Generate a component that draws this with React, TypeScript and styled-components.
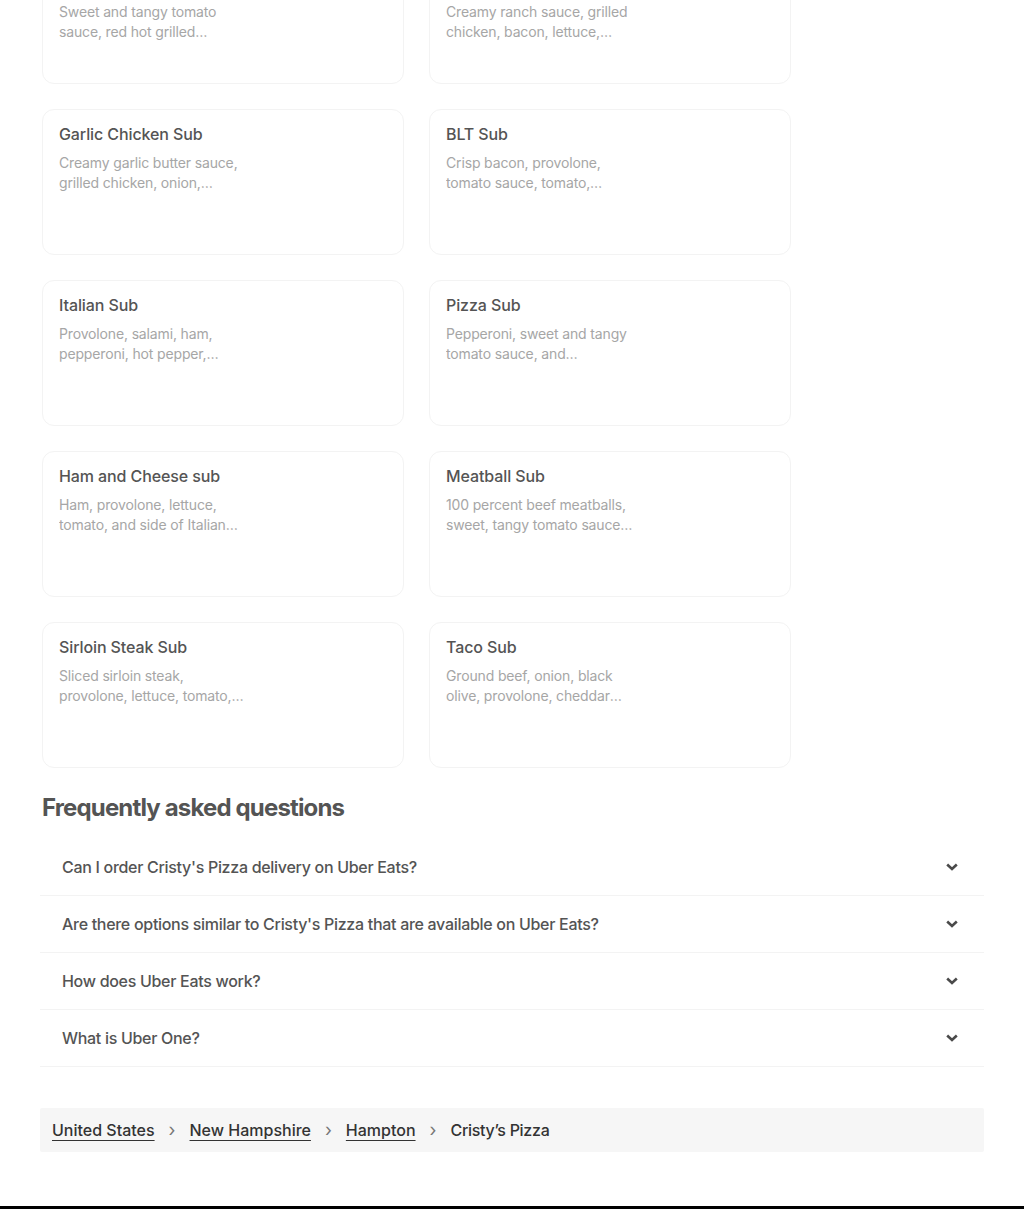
import React from "react";
import styled, { createGlobalStyle } from "styled-components";

const Global = createGlobalStyle`
  html, body { margin: 0; padding: 0; background: #ffffff; }
  body { font-family: Inter, "Noto Sans", Roboto, sans-serif; overflow: hidden; }
  * { box-sizing: border-box; }
`;

const Page = styled.div`
  width: 1024px;
  height: 1209px;
  overflow: hidden;
  display: flex;
  flex-direction: column;
`;

const Main = styled.main`
  padding: 0 40px;
  margin-top: -62px;
  display: flex;
  flex-direction: column;
`;

const Grid = styled.div`
  display: grid;
  grid-template-columns: repeat(2, 362px);
  grid-auto-rows: 146px;
  column-gap: 25px;
  row-gap: 25px;
  padding-left: 2px;
`;

const Card = styled.div`
  border: 1px solid #f3f3f3;
  border-radius: 12px;
  padding: 14px 16px 0 16px;
  display: flex;
`;

const TextCol = styled.div`
  width: 190px;
  display: flex;
  flex-direction: column;
  gap: 9px;
`;

const Title = styled.div`
  font-size: 16px;
  line-height: 20px;
  font-weight: 500;
  color: #545454;
  letter-spacing: -0.1px;
`;

const Desc = styled.div`
  font-size: 14px;
  line-height: 20px;
  color: #a6a6a6;
  letter-spacing: -0.15px;
  display: -webkit-box;
  -webkit-line-clamp: 2;
  -webkit-box-orient: vertical;
  overflow: hidden;
`;

const Heading = styled.h2`
  margin: 24px 0 15px 2px;
  font-size: 24px;
  line-height: 32px;
  font-weight: 700;
  color: #545454;
  letter-spacing: -0.85px;
`;

const FaqList = styled.div`
  display: flex;
  flex-direction: column;
`;

const FaqRow = styled.div`
  height: 57px;
  display: flex;
  align-items: center;
  justify-content: space-between;
  padding: 0 26px 0 22px;
  border-bottom: 1px solid #f3f3f3;
`;

const Question = styled.span`
  font-size: 16px;
  line-height: 20px;
  font-weight: 500;
  color: #545454;
  letter-spacing: -0.3px;
`;

const Chevron = () => (
  <svg width="12" height="8" viewBox="0 0 12 8">
    <polyline points="1.2,1.5 6,6 10.8,1.5" fill="none" stroke="#4a4a4a" strokeWidth="2.6" strokeLinejoin="miter" />
  </svg>
);

const Crumbs = styled.nav`
  margin-top: 41px;
  height: 44px;
  background: #f6f6f6;
  display: flex;
  align-items: center;
  padding: 0 12px;
  border-radius: 2px;
`;

const CrumbLink = styled.a`
  font-size: 16px;
  line-height: 20px;
  font-weight: 500;
  color: #333333;
  text-decoration: underline;
  text-underline-offset: 4px;
  text-decoration-thickness: 1px;
  letter-spacing: 0px;
`;

const CrumbCurrent = styled.span`
  font-size: 16px;
  line-height: 20px;
  font-weight: 500;
  color: #333333;
  letter-spacing: -0.3px;
`;

const Sep = styled.span`
  font-size: 18px;
  color: #777;
  margin: 0 14px;
  line-height: 20px;
`;

const Footer = styled.footer`
  height: 3px;
  background: #000000;
  margin-top: 54px;
`;

const items = [
  ["Spicy Buffalo Chicken Club Sub", "Sweet and tangy tomato sauce, red hot grilled chicken, provolone"],
  ["Chicken Bacon Ranch Club Sub", "Creamy ranch sauce, grilled chicken, bacon, lettuce, tomato"],
  ["Garlic Chicken Sub", "Creamy garlic butter sauce, grilled chicken, onion, provolone"],
  ["BLT Sub", "Crisp bacon, provolone, tomato sauce, tomato, lettuce"],
  ["Italian Sub", "Provolone, salami, ham, pepperoni, hot pepper, lettuce"],
  ["Pizza Sub", "Pepperoni, sweet and tangy tomato sauce, and provolone\u00a0cheese\u00a0melted"],
  ["Ham and Cheese sub", "Ham, provolone, lettuce, tomato, and side of Italian dressing"],
  ["Meatball Sub", "100 percent beef meatballs, sweet, tangy tomato sauce and provolone"],
  ["Sirloin Steak Sub", "Sliced sirloin steak, provolone, lettuce, tomato, onion"],
  ["Taco Sub", "Ground beef, onion, black olive, provolone, cheddar cheese"],
];

const faqs = [
  "Can I order Cristy's Pizza delivery on Uber Eats?",
  "Are there options similar to Cristy's Pizza that are available on Uber Eats?",
  "How does Uber Eats work?",
  "What is Uber One?",
];

export default function App() {
  return (
    <Page>
      <Global />
      <Main>
        <Grid>
          {items.map(([t, d]) => (
            <Card key={t}>
              <TextCol>
                <Title>{t}</Title>
                <Desc>{d}</Desc>
              </TextCol>
            </Card>
          ))}
        </Grid>
        <Heading>Frequently asked questions</Heading>
        <FaqList>
          {faqs.map((q) => (
            <FaqRow key={q}>
              <Question>{q}</Question>
              <Chevron />
            </FaqRow>
          ))}
        </FaqList>
        <Crumbs>
          <CrumbLink href="#">United States</CrumbLink>
          <Sep>›</Sep>
          <CrumbLink href="#">New Hampshire</CrumbLink>
          <Sep>›</Sep>
          <CrumbLink href="#">Hampton</CrumbLink>
          <Sep>›</Sep>
          <CrumbCurrent>Cristy’s Pizza</CrumbCurrent>
        </Crumbs>
      </Main>
      <Footer />
    </Page>
  );
}
